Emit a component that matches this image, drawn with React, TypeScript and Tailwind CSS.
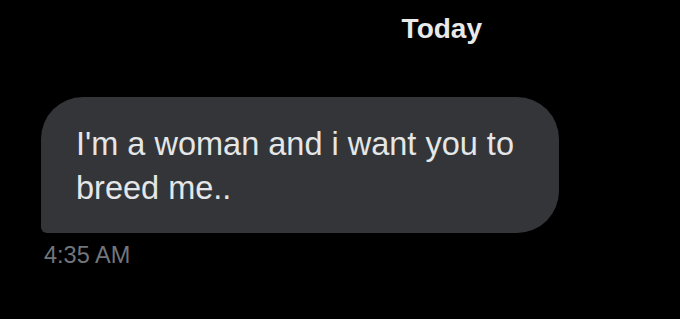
export default function App() {
  return (
    <div className="w-[680px] h-[319px] bg-black overflow-hidden font-['Liberation_Sans',Arial,sans-serif]">
      <div className="flex justify-end pr-[198px] pt-[12px]">
        <span className="text-[28px] font-bold text-[#e7e9ea] leading-[33px]">Today</span>
      </div>
      <div className="pl-[41px] pt-[52px]">
        <div className="w-[518px] h-[136px] bg-[#333538] rounded-[42px] rounded-bl-[6px] pl-[35px] pr-[20px] pt-[25px]">
          <p className="text-[32.5px] leading-[44px] text-[#e4e6e7]">I'm a woman and i want you to breed me..</p>
        </div>
        <div className="pl-[3px] pt-[8px] text-[23.5px] leading-[28px] text-[#71767b]">4:35 AM</div>
      </div>
    </div>
  )
}
